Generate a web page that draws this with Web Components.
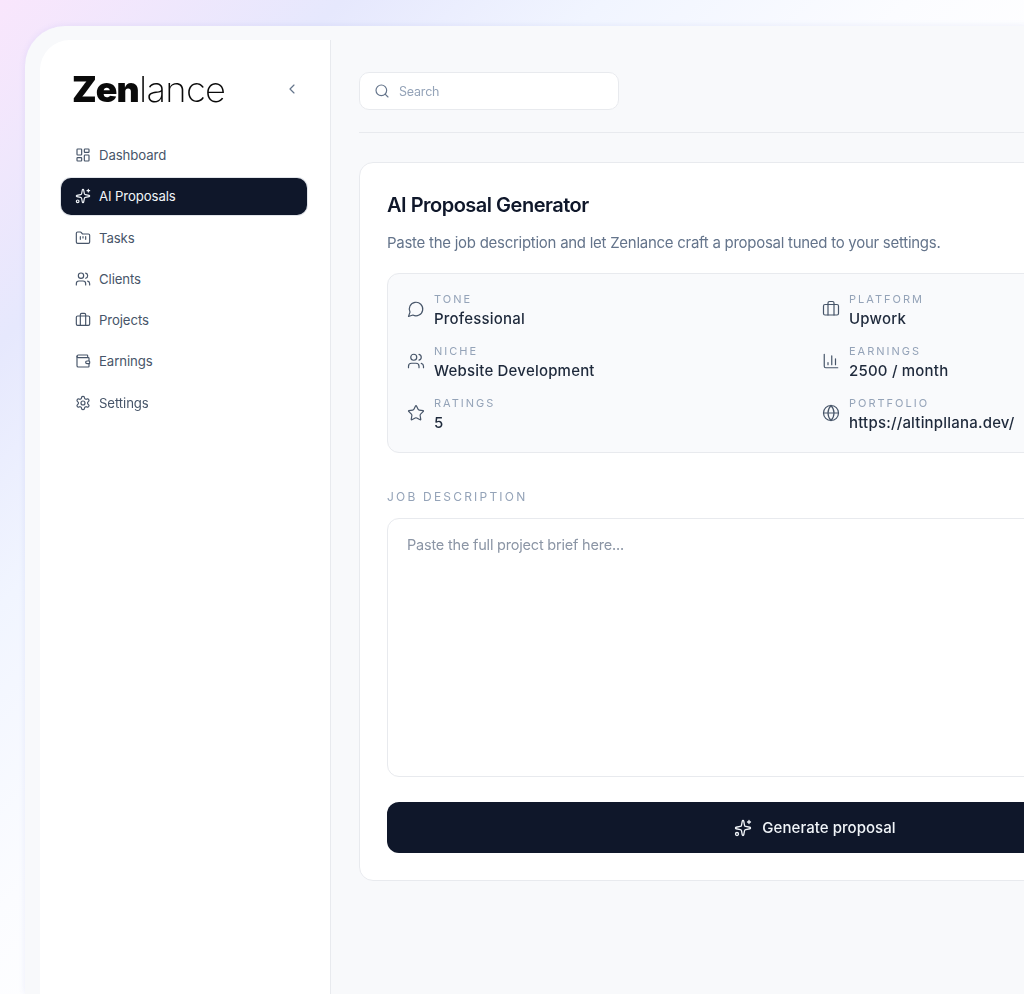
<!DOCTYPE html>
<html lang="en"><head><meta charset="utf-8"><title>Zenlance</title>
<style>
html,body{margin:0;height:994px;overflow:hidden}
body{font-family:Inter,"Liberation Sans",sans-serif;background:linear-gradient(135deg,#f9e6fc 0,#e6e8fd 17%,#f1f5ff 30%,#fbfcff 45%,#fff 56%)}
</style></head><body>
<z-app></z-app>
<script>
const P={
dash:'<rect x="3" y="3" width="7" height="9" rx="1"/><rect x="14" y="3" width="7" height="5" rx="1"/><rect x="14" y="12" width="7" height="9" rx="1"/><rect x="3" y="16" width="7" height="5" rx="1"/>',
spark:'<path d="M11.017 2.814a1 1 0 0 1 1.966 0l1.051 5.558a2 2 0 0 0 1.594 1.594l5.558 1.051a1 1 0 0 1 0 1.966l-5.558 1.051a2 2 0 0 0-1.594 1.594l-1.051 5.558a1 1 0 0 1-1.966 0l-1.051-5.558a2 2 0 0 0-1.594-1.594l-5.558-1.051a1 1 0 0 1 0-1.966l5.558-1.051a2 2 0 0 0 1.594-1.594z"/><path d="M20 2v4M22 4h-4"/><circle cx="4" cy="20" r="2"/>',
folder:'<path d="M4 20h16a2 2 0 0 0 2-2V8a2 2 0 0 0-2-2h-7.93a2 2 0 0 1-1.66-.9l-.82-1.2A2 2 0 0 0 7.93 3H4a2 2 0 0 0-2 2v13c0 1.1.9 2 2 2Z"/><path d="M8 10v4M12 10v2M16 10v4"/>',
users:'<path d="M16 21v-2a4 4 0 0 0-4-4H6a4 4 0 0 0-4 4v2"/><circle cx="9" cy="7" r="4"/><path d="M22 21v-2a4 4 0 0 0-3-3.87M16 3.13a4 4 0 0 1 0 7.75"/>',
brief:'<path d="M16 20V4a2 2 0 0 0-2-2h-4a2 2 0 0 0-2 2v16"/><rect x="2" y="6" width="20" height="14" rx="2"/>',
wallet:'<path d="M19 7V4a1 1 0 0 0-1-1H5a2 2 0 0 0 0 4h15a1 1 0 0 1 1 1v4h-3a2 2 0 0 0 0 4h3a1 1 0 0 0 1-1v-2a1 1 0 0 0-1-1"/><path d="M3 5v14a2 2 0 0 0 2 2h15a1 1 0 0 0 1-1v-4"/>',
gear:'<path d="M12.22 2h-.44a2 2 0 0 0-2 2v.18a2 2 0 0 1-1 1.73l-.43.25a2 2 0 0 1-2 0l-.15-.08a2 2 0 0 0-2.73.73l-.22.38a2 2 0 0 0 .73 2.73l.15.1a2 2 0 0 1 1 1.72v.51a2 2 0 0 1-1 1.74l-.15.09a2 2 0 0 0-.73 2.73l.22.38a2 2 0 0 0 2.73.73l.15-.08a2 2 0 0 1 2 0l.43.25a2 2 0 0 1 1 1.73V20a2 2 0 0 0 2 2h.44a2 2 0 0 0 2-2v-.18a2 2 0 0 1 1-1.73l.43-.25a2 2 0 0 1 2 0l.15.08a2 2 0 0 0 2.73-.73l.22-.39a2 2 0 0 0-.73-2.73l-.15-.08a2 2 0 0 1-1-1.74v-.5a2 2 0 0 1 1-1.74l.15-.09a2 2 0 0 0 .73-2.73l-.22-.38a2 2 0 0 0-2.73-.73l-.15.08a2 2 0 0 1-2 0l-.43-.25a2 2 0 0 1-1-1.73V4a2 2 0 0 0-2-2z"/><circle cx="12" cy="12" r="3"/>',
search:'<path d="m21 21-4.34-4.34"/><circle cx="11" cy="11" r="8"/>',
chev:'<path d="m15 18-6-6 6-6"/>',
msg:'<path d="M7.9 20A9 9 0 1 0 4 16.1L2 22Z"/>',
chart:'<path d="M3 3v16a2 2 0 0 0 2 2h16M18 17V9M13 17V5M8 17v-3"/>',
star:'<path d="M11.525 2.295a.53.53 0 0 1 .95 0l2.31 4.679a2.123 2.123 0 0 0 1.595 1.16l5.166.756a.53.53 0 0 1 .294.904l-3.736 3.638a2.123 2.123 0 0 0-.611 1.878l.882 5.14a.53.53 0 0 1-.771.56l-4.618-2.428a2.122 2.122 0 0 0-1.973 0L6.396 21.01a.53.53 0 0 1-.77-.56l.881-5.139a2.122 2.122 0 0 0-.611-1.879L2.16 9.795a.53.53 0 0 1 .294-.906l5.165-.755a2.122 2.122 0 0 0 1.597-1.16z"/>',
globe:'<circle cx="12" cy="12" r="10"/><path d="M12 2a14.5 14.5 0 0 0 0 20 14.5 14.5 0 0 0 0-20M2 12h20"/>'
};
function def(name,html){
  customElements.define(name,class extends HTMLElement{
    connectedCallback(){
      if(this.shadowRoot)return;
      const a=k=>this.getAttribute(k)||'';
      this.attachShadow({mode:'open'}).innerHTML=html(a);
    }
  });
}
def('z-icon',a=>`<style>:host{display:inline-flex;flex:none;width:var(--s,16px);height:var(--s,16px)}svg{width:100%;height:100%;fill:none;stroke:currentColor;stroke-width:var(--w,1.75);stroke-linecap:round;stroke-linejoin:round}</style><svg viewBox="0 0 24 24" aria-hidden="true">${P[a('name')]}</svg>`);
def('z-logo',()=>`<style>:host{display:block;color:#0a0a0a;font-size:35px;line-height:35px;white-space:nowrap}
b{display:inline-block;font-weight:900;transform:scaleX(1.02);transform-origin:left;letter-spacing:-1px;width:67px}
span{display:inline-block;font-weight:200;transform:scaleX(1.04);transform-origin:left;letter-spacing:-.7px}</style><b>Zen</b><span>lance</span>`);
def('z-nav',a=>`<style>:host{display:flex;align-items:center;gap:8px;height:37px;padding-left:14px;border-radius:10px;font-size:13.2px;letter-spacing:-.1px;color:#475569;box-sizing:border-box}
:host([active]){background:#0f172a;color:#f1f5f9;box-shadow:0 0 0 1px #e2e5ea}</style><z-icon name="${a('icon')}"></z-icon><slot></slot>`);
def('z-sidebar',()=>`<style>:host{display:flex;flex-direction:column;flex:none;width:291px;box-sizing:border-box;padding:0 23px 0 21px;background:#fff;border-right:1px solid #e8eaee;border-top-left-radius:30px}
header{display:flex;align-items:center;justify-content:space-between;padding:0 7px 0 11px;height:98px}
header z-icon{color:#64748b;--s:16px}
nav{display:flex;flex-direction:column;gap:4.28px;margin-top:-1.5px}</style>
<header><z-logo></z-logo><z-icon name="chev"></z-icon></header>
<nav><slot></slot></nav>`);
def('z-search',()=>`<style>:host{display:flex;align-items:center;gap:9px;width:260px;height:38px;box-sizing:border-box;padding-left:14px;background:#fff;border:1px solid #e8eaee;border-radius:10px;font-size:12.5px;letter-spacing:-.2px;color:#94a3b8}
z-icon{color:#64748b;--s:16px}</style><z-icon name="search"></z-icon><slot></slot>`);
def('z-info',a=>`<style>:host{display:flex;align-items:center;gap:9px;height:40px}
z-icon{--s:18px;--w:1.6;color:#475569;margin-top:-3px}
div{display:flex;flex-direction:column;min-width:0}
small{font-size:11px;line-height:14px;letter-spacing:2px;color:#94a3b8;text-transform:uppercase}
strong{font-size:15px;line-height:21px;margin-top:2px;font-weight:500;letter-spacing:.2px;color:#1e293b;white-space:nowrap}</style>
<z-icon name="${a('icon')}"></z-icon><div><small>${a('label')}</small><strong><slot></slot></strong></div>`);
def('z-card',()=>`<style>:host{display:block;width:912px;height:719px;box-sizing:border-box;padding:29px 27px 28px;background:#fff;border:1px solid #e8eaee;border-radius:14px;flex:none}
h1{margin:0;font-size:20px;line-height:26px;font-weight:600;letter-spacing:-.5px;color:#0f172a}
p{margin:14px 0 0;font-size:15px;line-height:22px;letter-spacing:-.27px;color:#64748b}
.panel{display:grid;grid-template-columns:1fr 1fr;column-gap:14px;row-gap:12px;margin-top:19px;height:180px;box-sizing:border-box;padding:16px 19px;background:#f9fafc;border:1px solid #e8eaee;border-radius:12px;align-content:start}
.lab{margin-top:36px;font-size:12px;line-height:16px;letter-spacing:2.2px;color:#94a3b8;font-weight:400}
.ta{margin-top:13px;height:259px;box-sizing:border-box;padding:15px 19px;border:1px solid #e8eaee;border-radius:12px;font-size:14.5px;line-height:22px;letter-spacing:-.2px;color:#8b95a5}
button{display:flex;align-items:center;justify-content:center;gap:10px;width:100%;height:51px;margin-top:25px;border:0;border-radius:12px;background:#0f172a;color:#f1f5f9;font:500 15px Inter,"Liberation Sans",sans-serif;letter-spacing:.05px}
button z-icon{--s:18px}</style>
<h1>AI Proposal Generator</h1>
<p>Paste the job description and let Zenlance craft a proposal tuned to your settings.</p>
<div class="panel">
<z-info icon="msg" label="Tone">Professional</z-info><z-info icon="brief" label="Platform">Upwork</z-info>
<z-info icon="users" label="Niche">Website Development</z-info><z-info icon="chart" label="Earnings">2500 / month</z-info>
<z-info icon="star" label="Ratings">5</z-info><z-info icon="globe" label="Portfolio">https://altinpllana.dev/</z-info>
</div>
<div class="lab">JOB DESCRIPTION</div>
<div class="ta">Paste the full project brief here...</div>
<button><z-icon name="spark"></z-icon>Generate proposal</button>`);
def('z-main',()=>`<style>:host{display:flex;flex-direction:column;flex:1;min-width:0;padding:32px 0 0 28px;overflow:hidden}
hr{margin:22px 0 29px;border:0;border-top:1px solid #e8eaee;width:100%}</style>
<z-search>Search</z-search><hr><z-card></z-card>`);
def('z-app',()=>`<style>:host{display:flex;box-sizing:border-box;width:1015px;height:968px;margin:26px 0 0 25px;padding:14px 0 0 15px;background:#f8f9fb;border-radius:40px 16px 0 0;box-shadow:0 0 6px rgba(110,120,220,.12);filter:blur(.3px)}</style>
<z-sidebar>
<z-nav icon="dash">Dashboard</z-nav><z-nav icon="spark" active>AI Proposals</z-nav><z-nav icon="folder">Tasks</z-nav><z-nav icon="users">Clients</z-nav><z-nav icon="brief">Projects</z-nav><z-nav icon="wallet">Earnings</z-nav><z-nav icon="gear">Settings</z-nav>
</z-sidebar><z-main></z-main>`);
</script>
</body></html>
